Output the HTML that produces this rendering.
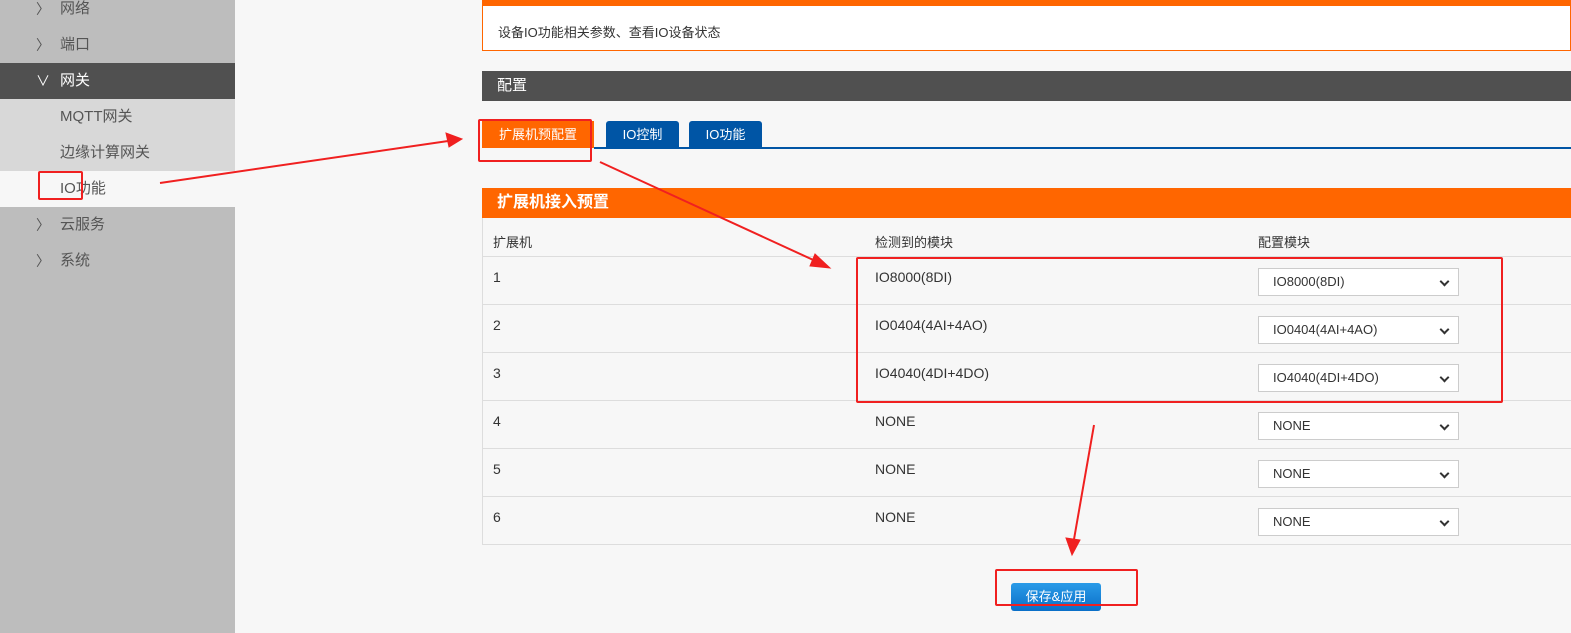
<!DOCTYPE html>
<html><head><meta charset="utf-8"><style>
*{margin:0;padding:0;box-sizing:border-box}
body{width:1571px;height:633px;overflow:hidden;background:#f7f7f7;font-family:"Liberation Sans","Noto Sans CJK SC",sans-serif;font-size:14px;color:#333;position:relative}
.sb{position:absolute;left:0;top:0;width:235px;height:633px;background:#bdbdbd}
.it{position:absolute;left:0;width:235px;height:36px;line-height:36px;padding-left:60px;color:#555;font-size:15px}
.ch{position:absolute;left:36px;font-size:14px;color:#555}
.abs{position:absolute}
.sel{position:absolute;left:1258px;width:201px;height:28px;background:#fff;border:1px solid #ccc;font-size:13px;line-height:26px;padding-left:14px;color:#333}
.sel:after{content:"";position:absolute;right:10px;top:9px;width:5px;height:5px;border-right:2px solid #333;border-bottom:2px solid #333;transform:rotate(45deg)}
.row{position:absolute;left:482px;width:1089px;border-bottom:1px solid #ddd}
.red{position:absolute;border:2px solid #f02020;border-radius:2px}
</style></head><body>
<div class="sb">
<div class="it" style="top:-9px"><span class="ch">〉</span>网络</div>
<div class="it" style="top:27px"><span class="ch">〉</span>端口</div>
<div class="it" style="top:63px;background:#505050;color:#fff"><span class="ch" style="color:#fff">∨</span>网关</div>
<div class="it" style="top:99px;background:#d8d8d8">MQTT网关</div>
<div class="it" style="top:135px;background:#d8d8d8">边缘计算网关</div>
<div class="it" style="top:171px;background:#f7f7f7">IO功能</div>
<div class="it" style="top:207px"><span class="ch">〉</span>云服务</div>
<div class="it" style="top:243px"><span class="ch">〉</span>系统</div>
</div>
<div class="abs" style="left:482px;top:0;width:1089px;height:51px;border:1px solid #f60;border-top:6px solid #f60;background:#fff;padding:16px 0 0 15px;font-size:13px">设备IO功能相关参数、查看IO设备状态</div>
<div class="abs" style="left:482px;top:71px;width:1089px;height:30px;background:#505050;color:#fff;font-size:15px;line-height:30px;padding-left:15px">配置</div>
<div class="abs" style="left:482px;top:121px;width:112px;height:27px;background:#f60;color:#fff;font-size:13px;line-height:27px;text-align:center">扩展机预配置</div>
<div class="abs" style="left:606px;top:121px;width:73px;height:27px;background:#0055a5;color:#fff;font-size:13px;line-height:27px;text-align:center;border-radius:3px 3px 0 0">IO控制</div>
<div class="abs" style="left:689px;top:121px;width:73px;height:27px;background:#0055a5;color:#fff;font-size:13px;line-height:27px;text-align:center;border-radius:3px 3px 0 0">IO功能</div>
<div class="abs" style="left:594px;top:147px;width:977px;height:2px;background:#0055a5"></div>
<div class="abs" style="left:482px;top:188px;width:1089px;height:30px;background:#f60;color:#fff;font-size:16px;font-weight:bold;line-height:30px;padding-left:15px">扩展机接入预置</div>
<div class="abs" style="left:482px;top:218px;width:1px;height:327px;background:#ddd"></div>
<div class="row" style="top:218px;height:39px"><span class="abs" style="left:11px;top:14px;font-size:13px">扩展机</span><span class="abs" style="left:393px;top:14px;font-size:13px">检测到的模块</span><span class="abs" style="left:776px;top:14px;font-size:13px">配置模块</span></div>
<div class="row" style="top:257px;height:48px"><span class="abs" style="left:11px;top:12px">1</span><span class="abs" style="left:393px;top:12px">IO8000(8DI)</span></div>
<div class="row" style="top:305px;height:48px"><span class="abs" style="left:11px;top:12px">2</span><span class="abs" style="left:393px;top:12px">IO0404(4AI+4AO)</span></div>
<div class="row" style="top:353px;height:48px"><span class="abs" style="left:11px;top:12px">3</span><span class="abs" style="left:393px;top:12px">IO4040(4DI+4DO)</span></div>
<div class="row" style="top:401px;height:48px"><span class="abs" style="left:11px;top:12px">4</span><span class="abs" style="left:393px;top:12px">NONE</span></div>
<div class="row" style="top:449px;height:48px"><span class="abs" style="left:11px;top:12px">5</span><span class="abs" style="left:393px;top:12px">NONE</span></div>
<div class="row" style="top:497px;height:48px"><span class="abs" style="left:11px;top:12px">6</span><span class="abs" style="left:393px;top:12px">NONE</span></div>
<div class="sel" style="top:268px">IO8000(8DI)</div>
<div class="sel" style="top:316px">IO0404(4AI+4AO)</div>
<div class="sel" style="top:364px">IO4040(4DI+4DO)</div>
<div class="sel" style="top:412px">NONE</div>
<div class="sel" style="top:460px">NONE</div>
<div class="sel" style="top:508px">NONE</div>
<div class="abs" style="left:1011px;top:583px;width:90px;height:28px;background:linear-gradient(#2a9be8,#0a6fc8);border-radius:3px;color:#fff;font-size:13px;line-height:28px;text-align:center">保存&amp;应用</div>
<div class="red" style="left:38px;top:171px;width:45px;height:29px"></div>
<div class="red" style="left:478px;top:119px;width:114px;height:43px"></div>
<div class="red" style="left:856px;top:257px;width:647px;height:146px"></div>
<div class="red" style="left:995px;top:569px;width:143px;height:37px"></div>
<svg class="abs" style="left:0;top:0" width="1571" height="633">
<g stroke="#f02020" fill="#f02020">
<line x1="160" y1="183" x2="455" y2="140" stroke-width="2"/><polygon points="462,139 446,133 449,147"/>
<line x1="600" y1="162" x2="822" y2="264" stroke-width="2"/><polygon points="830,268 815,254 810,266"/>
<line x1="1094" y1="425" x2="1073" y2="545" stroke-width="2"/><polygon points="1072,555 1066,538 1080,540"/>
</g></svg>
</body></html>
